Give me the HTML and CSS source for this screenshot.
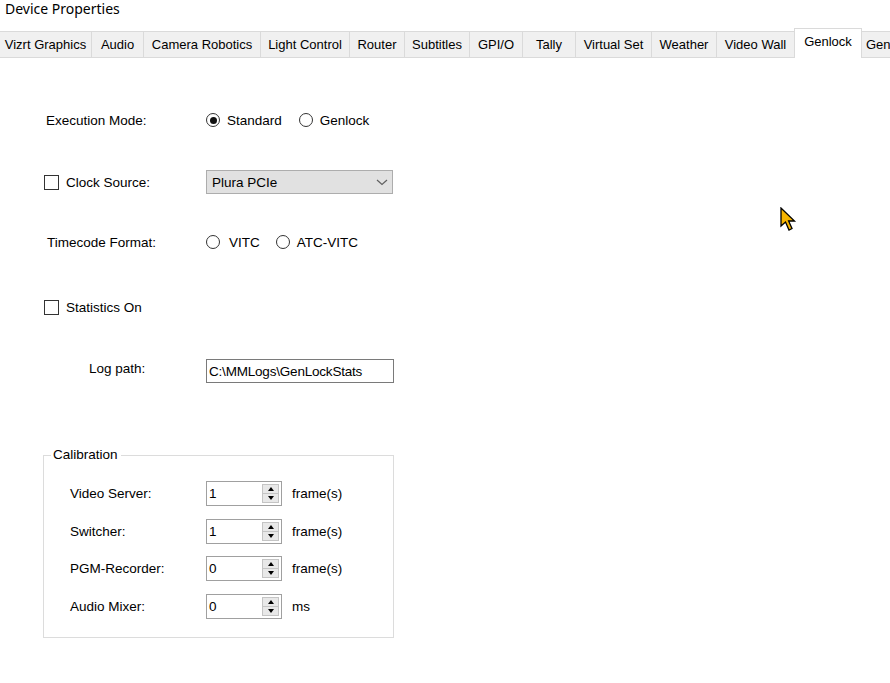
FILE: index.html
```html
<!DOCTYPE html>
<html>
<head>
<meta charset="utf-8">
<link rel="stylesheet" href="styles.css">
</head>
<body>
<div class="window">
  <div class="title">Device Properties</div>
  <div class="tabs">
    <div class="tab">Vizrt Graphics</div>
    <div class="tab">Audio</div>
    <div class="tab">Camera Robotics</div>
    <div class="tab">Light Control</div>
    <div class="tab">Router</div>
    <div class="tab">Subtitles</div>
    <div class="tab">GPI/O</div>
    <div class="tab">Tally</div>
    <div class="tab">Virtual Set</div>
    <div class="tab">Weather</div>
    <div class="tab">Video Wall</div>
    <div class="tab active">Genlock</div>
    <div class="tab tab-clip">General</div>
  </div>
  <div class="page">
    <div class="row row-exec">
      <div class="label label-exec">Execution Mode:</div>
      <div class="options">
        <span class="radio checked"></span><span class="opt-text">Standard</span>
        <span class="radio radio-gap"></span><span class="opt-text">Genlock</span>
      </div>
    </div>
    <div class="row row-clock">
      <div class="label label-check"><span class="check"></span><span class="opt-text">Clock Source:</span></div>
      <div class="combo"><span>Plura PCIe</span>
        <svg class="chev" width="12" height="7" viewBox="0 0 12 7"><path d="M1 1 L6 5.5 L11 1" fill="none" stroke="#606060" stroke-width="1.2"/></svg>
      </div>
    </div>
    <div class="row row-tc">
      <div class="label label-tc">Timecode Format:</div>
      <div class="options">
        <span class="radio"></span><span class="opt-text vitc">VITC</span>
        <span class="radio radio-gap2"></span><span class="opt-text">ATC-VITC</span>
      </div>
    </div>
    <div class="row row-stats">
      <div class="label label-check"><span class="check"></span><span class="opt-text">Statistics On</span></div>
    </div>
    <div class="row row-log">
      <div class="label label-log">Log path:</div>
      <div class="textbox">C:\MMLogs\GenLockStats</div>
    </div>
    <fieldset class="group">
      <legend class="legend">Calibration</legend>
      <div class="cal-row cal-first">
        <div class="cal-label">Video Server:</div>
        <div class="spin"><span class="spin-val">1</span><span class="spin-btns"><span class="sb up"></span><span class="sb down"></span></span></div>
        <div class="unit">frame(s)</div>
      </div>
      <div class="cal-row">
        <div class="cal-label">Switcher:</div>
        <div class="spin"><span class="spin-val">1</span><span class="spin-btns"><span class="sb up"></span><span class="sb down"></span></span></div>
        <div class="unit">frame(s)</div>
      </div>
      <div class="cal-row">
        <div class="cal-label">PGM-Recorder:</div>
        <div class="spin"><span class="spin-val">0</span><span class="spin-btns"><span class="sb up"></span><span class="sb down"></span></span></div>
        <div class="unit">frame(s)</div>
      </div>
      <div class="cal-row">
        <div class="cal-label">Audio Mixer:</div>
        <div class="spin"><span class="spin-val">0</span><span class="spin-btns"><span class="sb up"></span><span class="sb down"></span></span></div>
        <div class="unit">ms</div>
      </div>
    </fieldset>
    <svg class="cursor" width="18" height="26" viewBox="0 0 18 26">
      <path d="M1 1 L1 19 L5.5 15 L9 23 L12 21.5 L8.6 14 L14.5 14 Z" fill="#f7b500" stroke="#000" stroke-width="1.3" stroke-linejoin="miter"/>
    </svg>
  </div>
</div>
</body>
</html>
```

FILE: styles.css
```css
html, body {
  margin: 0;
  padding: 0;
  background: #ffffff;
}
.window {
  width: 890px;
  height: 683px;
  overflow: hidden;
  position: relative;
  font-family: "Liberation Sans", Arial, sans-serif;
  font-size: 13.5px;
  color: #000;
}
.title {
  height: 28px;
  padding-left: 5px;
  font-family: "Noto Sans", "Open Sans", sans-serif;
  font-size: 14px;
  line-height: 18px;
  color: #000;
}
.tabs {
  display: grid;
  grid-template-columns: 92px 52px 117px 89px 55px 65px 53px 53px 76px 65px 78px 67px 60px;
  height: 30px;
  align-items: end;
  border-bottom: 1px solid #dadada;
  box-sizing: border-box;
  font-size: 13px;
}
.tab {
  height: 25px;
  line-height: 26px;
  background: #f0f0f0;
  border-top: 1px solid #dadada;
  border-right: 1px solid #dadada;
  text-align: center;
  white-space: nowrap;
  overflow: hidden;
  box-sizing: content-box;
}
.tab.active {
  height: 29px;
  line-height: 26px;
  background: #ffffff;
  border-left: 1px solid #dadada;
  margin-left: -1px;
  margin-bottom: -1px;
  position: relative;
}
.tab-clip {
  text-align: left;
  padding-left: 4px;
}
.page {
  position: relative;
  display: flow-root;
  height: 625px;
}
.row {
  display: flex;
  align-items: center;
  height: 24px;
}
.row-exec { margin-top: 50px; }
.row-clock { margin-top: 38px; }
.row-tc { margin-top: 36px; }
.row-stats { margin-top: 41px; }
.row-log { margin-top: 37px; }
.label {
  width: 206px;
  box-sizing: border-box;
  display: flex;
  align-items: center;
  white-space: nowrap;
}
.label-exec { padding-left: 46px; }
.label-tc { padding-left: 47px; }
.label-log { padding-left: 89px; }
.label-check { padding-left: 44px; }
.options {
  display: flex;
  align-items: center;
}
.radio {
  width: 12px;
  height: 12px;
  border: 1px solid #333;
  border-radius: 50%;
  box-sizing: content-box;
  display: flex;
  align-items: center;
  justify-content: center;
  margin-right: 7px;
  background: #fff;
}
.radio.checked::after {
  content: "";
  width: 7px;
  height: 7px;
  border-radius: 50%;
  background: #111;
}
.radio-gap { margin-left: 17px; }
.radio-gap2 { margin-left: 16px; }
.vitc { margin-left: 2px; }
.check {
  width: 13px;
  height: 13px;
  border: 1px solid #333;
  box-sizing: content-box;
  background: #fff;
  margin-right: 7px;
}
.combo {
  width: 187px;
  height: 24px;
  box-sizing: border-box;
  background: #e1e1e1;
  border: 1px solid #adadad;
  display: flex;
  align-items: center;
  justify-content: space-between;
  padding: 0 4px 0 5px;
}
.textbox {
  width: 188px;
  height: 24px;
  margin-top: 6px;
  box-sizing: border-box;
  border: 1px solid #7a7a7a;
  display: flex;
  align-items: center;
  padding-left: 2px;
  letter-spacing: -0.2px;
  white-space: nowrap;
}
.group {
  margin: 67px 0 0 43px;
  width: 351px;
  height: 191px;
  box-sizing: border-box;
  border: 1px solid #dcdcdc;
  padding: 0;
}
.legend {
  margin-left: 7px;
  padding: 0 3px 0 2px;
  line-height: 16px;
}
.cal-row {
  display: flex;
  align-items: center;
  height: 25px;
  margin-top: 12.5px;
}
.cal-first { margin-top: 18px; }
.cal-label {
  width: 162px;
  padding-left: 26px;
  box-sizing: border-box;
}
.spin {
  width: 76px;
  height: 25px;
  box-sizing: border-box;
  border: 1px solid #a0a0a0;
  display: flex;
  align-items: center;
  justify-content: space-between;
  padding-left: 2px;
  padding-right: 2px;
}
.spin-btns {
  display: flex;
  flex-direction: column;
  width: 17px;
  height: 19px;
}
.sb {
  flex: 1;
  background: #e8e8e8;
  border: 1px solid #c4c4c4;
  display: flex;
  align-items: center;
  justify-content: center;
}
.sb + .sb { border-top: none; }
.sb.up::after {
  content: "";
  border-left: 3.5px solid transparent;
  border-right: 3.5px solid transparent;
  border-bottom: 4px solid #000;
}
.sb.down::after {
  content: "";
  border-left: 3.5px solid transparent;
  border-right: 3.5px solid transparent;
  border-top: 4px solid #000;
}
.unit {
  margin-left: 10px;
}
.cursor {
  position: absolute;
  left: 780px;
  top: 149px;
}
```
